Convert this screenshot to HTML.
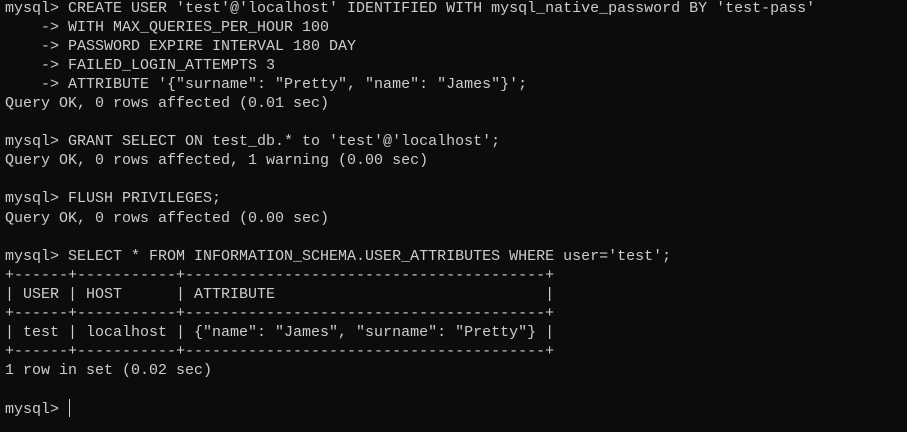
<!DOCTYPE html>
<html><head><style>
html,body{margin:0;padding:0;background:#0c0c0c;width:907px;height:432px;overflow:hidden}
pre{margin:0;position:absolute;left:5px;top:-1px;font-family:"Liberation Mono",monospace;font-size:15px;line-height:19.05px;color:#cccccc}
.c{display:inline-block;width:1px;height:18px;background:#cccccc;vertical-align:-4px;margin-left:1px}
</style></head><body>
<pre>mysql&gt; CREATE USER 'test'@'localhost' IDENTIFIED WITH mysql_native_password BY 'test-pass'
    -&gt; WITH MAX_QUERIES_PER_HOUR 100
    -&gt; PASSWORD EXPIRE INTERVAL 180 DAY
    -&gt; FAILED_LOGIN_ATTEMPTS 3
    -&gt; ATTRIBUTE '{"surname": "Pretty", "name": "James"}';
Query OK, 0 rows affected (0.01 sec)

mysql&gt; GRANT SELECT ON test_db.* to 'test'@'localhost';
Query OK, 0 rows affected, 1 warning (0.00 sec)

mysql&gt; FLUSH PRIVILEGES;
Query OK, 0 rows affected (0.00 sec)

mysql&gt; SELECT * FROM INFORMATION_SCHEMA.USER_ATTRIBUTES WHERE user='test';
+------+-----------+----------------------------------------+
| USER | HOST      | ATTRIBUTE                              |
+------+-----------+----------------------------------------+
| test | localhost | {"name": "James", "surname": "Pretty"} |
+------+-----------+----------------------------------------+
1 row in set (0.02 sec)

mysql&gt; <span class="c"></span></pre>
</body></html>
